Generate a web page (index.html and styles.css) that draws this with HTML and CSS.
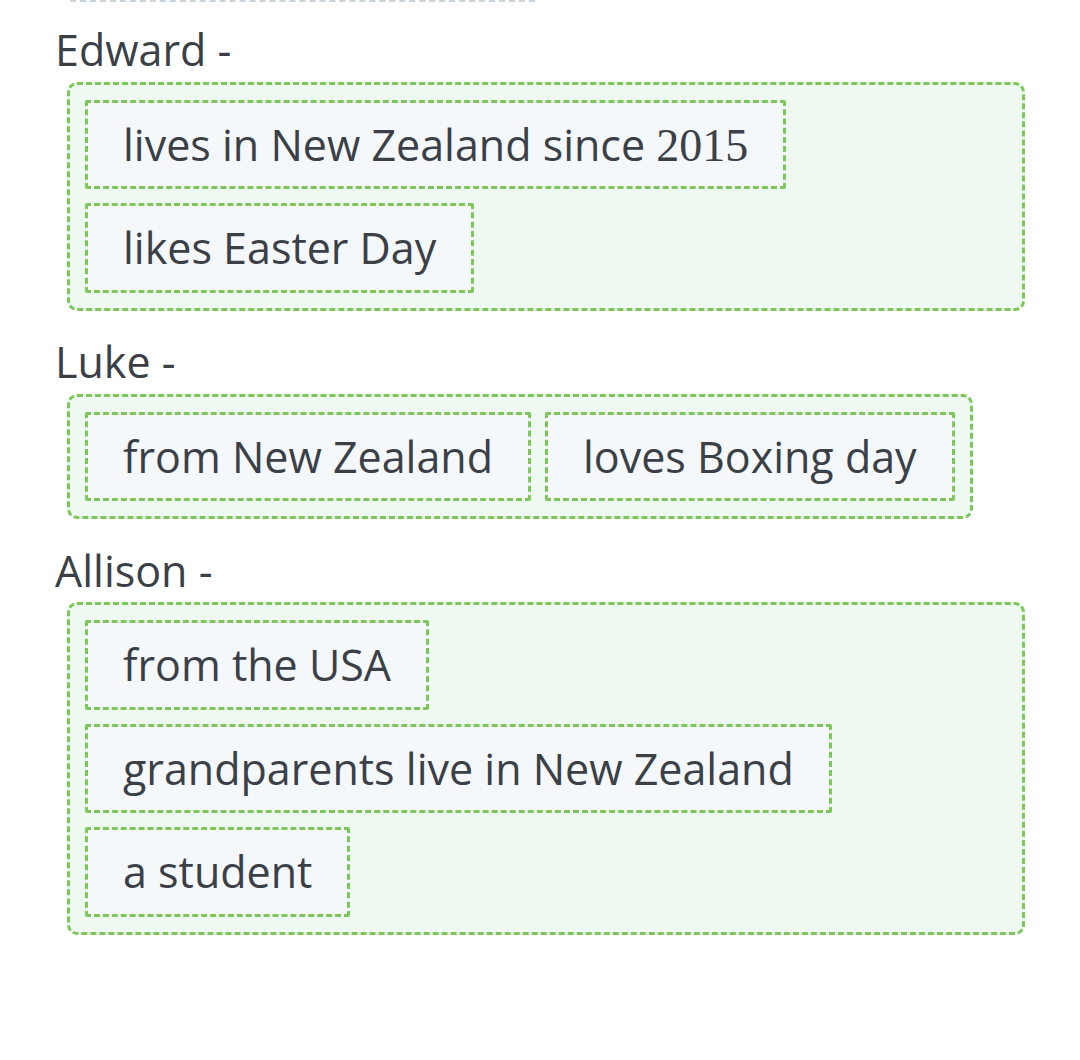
FILE: index.html
```html
<!doctype html>
<html>
<head>
	<meta charset="utf-8">
	<title>Match the facts</title>
	<link rel="stylesheet" href="styles.css">
</head>
<body>
	<div class="page">
		<!-- end of the previous block -->
		<div class="prev-edge"></div>

		<div class="group">
			<p class="label">Edward -</p>
			<div class="drop">
				<span class="chip">lives in New Zealand since <span class="math">2015</span></span>
				<span class="chip">likes Easter Day</span>
			</div>
		</div>

		<div class="group">
			<p class="label">Luke -</p>
			<div class="drop">
				<span class="chip">from New Zealand</span>
				<span class="chip">loves Boxing day</span>
			</div>
		</div>

		<div class="group">
			<p class="label">Allison -</p>
			<div class="drop">
				<span class="chip">from the USA</span>
				<span class="chip">grandparents live in New Zealand</span>
				<span class="chip">a student</span>
			</div>
		</div>
	</div>
</body>
</html>
```

FILE: styles.css
```css
html,body{margin:0;padding:0;background:#fff;}
p{margin:0;}
.page{
	padding:0 55px;
	font-family:"Open Sans","Noto Sans",sans-serif;
	font-size:43px;
	line-height:1.5;
	color:#3b4047;
}
/* 上一块的虚线底边 */
.prev-edge{
	width:465px;
	margin-left:15px;
	border-bottom:2px dashed #c9d4de;
	margin-bottom:15px;
}
.group{
	margin-bottom:18.5px;
}
.label{
	padding-top:2px;
	line-height:62.5px;
	color:#3b4047;
}
/* 放置区 */
.drop{
	display:flex;
	flex-wrap:wrap;
	gap:14px;
	width:fit-content;
	max-width:calc(100% - 12px);
	box-sizing:border-box;
	margin-left:12px;
	padding:15px;
	border:3px dashed #7cc758;
	border-radius:10px;
	background:#edf9f1;
}
.chip{
	display:block;
	padding:10px 35px 9px;
	border:3px dashed #7cc758;
	border-radius:2px;
	background:#f4f8fb;
	white-space:nowrap;
}
.math{
	font-family:"Liberation Serif","DejaVu Serif",serif;
	font-size:46px;
	line-height:1;
}
```
